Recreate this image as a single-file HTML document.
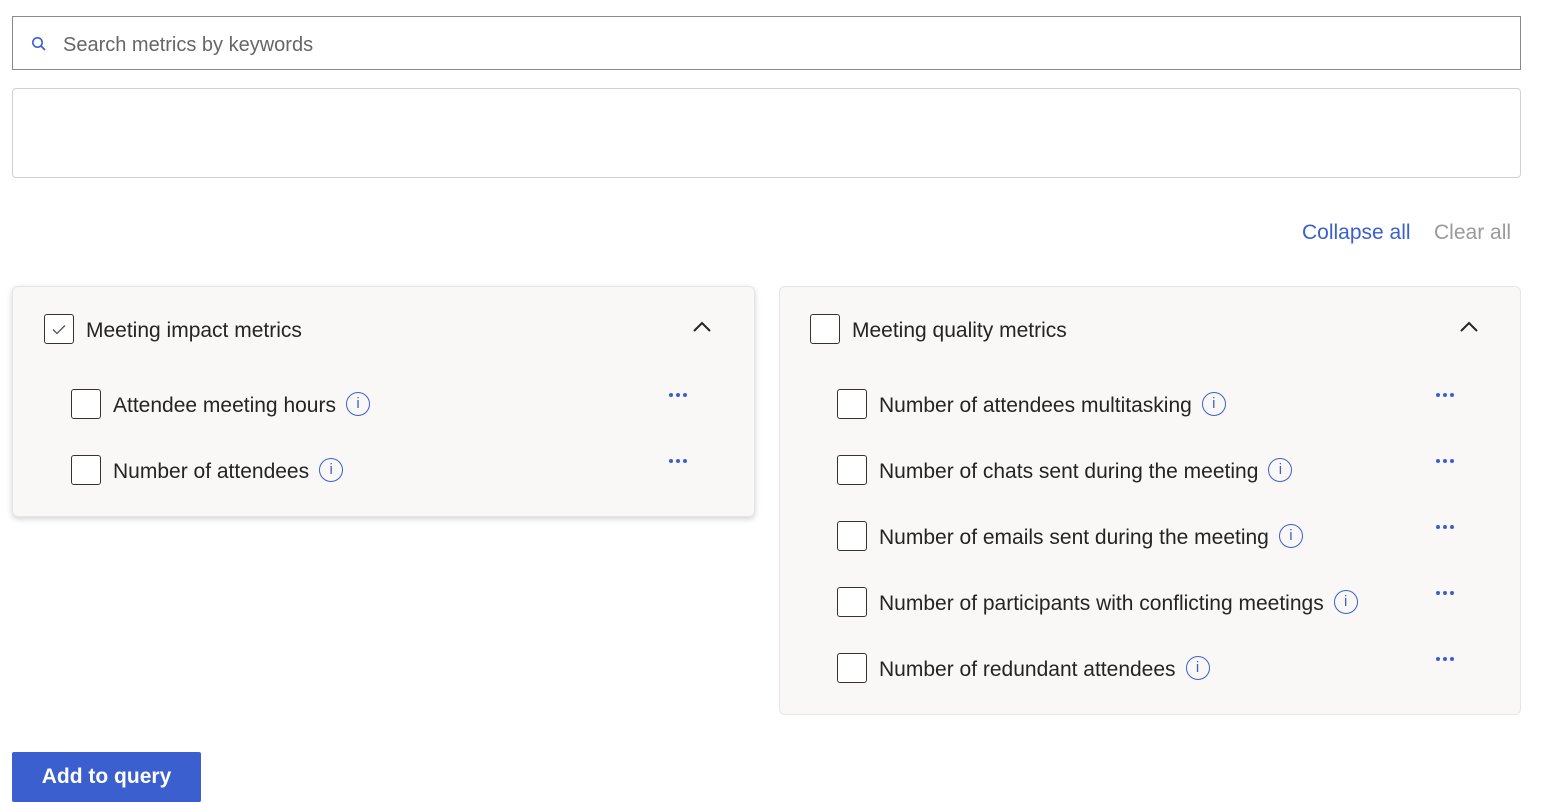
<!DOCTYPE html>
<html><head><meta charset="utf-8"><style>
*{box-sizing:border-box;margin:0;padding:0}
body{width:1554px;height:799px;background:#fff;font-family:"Liberation Sans",sans-serif;color:#242424;position:relative;overflow:hidden}
.abs{position:absolute}
.search{left:12px;top:16px;width:1509px;height:54px;border:1px solid #8a8a8a}
.box2{left:12px;top:88px;width:1509px;height:90px;border:1px solid #d1d1d1;border-radius:4px}
.card{background:#f9f8f7;border:1px solid #e6e6e6;border-radius:6px}
.cb{position:absolute;width:30px;height:30px;border:1px solid #333;border-radius:3px;background:#fff}
.t{position:absolute;font-size:21px;white-space:nowrap;line-height:24px}
.info{display:inline-block;width:24px;height:24px;border:1.6px solid #3b5fcf;border-radius:50%;color:#3b5fcf;font-size:15px;text-align:center;line-height:21px;margin-left:10px;vertical-align:top;position:relative;top:-2px}
.dots{position:absolute}
</style></head><body>
<div class="abs search">
<svg class="abs" style="left:18px;top:19px" width="16" height="16" viewBox="0 0 16 16"><circle cx="6.5" cy="6.5" r="4.7" fill="none" stroke="#3b5fcf" stroke-width="1.6"/><path d="M10 10l4 4" stroke="#3b5fcf" stroke-width="1.8"/></svg>
<div class="t" style="left:50px;top:16px;font-size:20px;color:#666">Search metrics by keywords</div>
</div>
<div class="abs box2"></div>
<div class="t" style="left:1302px;top:221px;color:#3b5fcf">Collapse all</div>
<div class="t" style="left:1434px;top:221px;color:#9a9a9a">Clear all</div>

<div class="abs card" style="left:12px;top:286px;width:743px;height:231px;box-shadow:0 2px 6px rgba(0,0,0,.18)"></div>
<div class="cb" style="left:44px;top:314px"><svg width="28" height="28" viewBox="0 0 28 28"><path d="M8 14.5l4 4 8-8" fill="none" stroke="#555" stroke-width="1.3"/></svg></div>
<div class="t" style="left:86px;top:319px">Meeting impact metrics</div>
<svg class="abs" style="left:692px;top:320px" width="20" height="14" viewBox="0 0 20 14"><path d="M2 11l8-8 8 8" fill="none" stroke="#242424" stroke-width="2"/></svg>
<div class="cb" style="left:71px;top:389px"></div>
<div class="t" style="left:113px;top:394px">Attendee meeting hours<span class="info">i</span></div>
<svg class="dots" style="left:668px;top:392px" width="20" height="6"><circle cx="3" cy="3" r="2" fill="#3b5fcf"/><circle cx="10" cy="3" r="2" fill="#3b5fcf"/><circle cx="17" cy="3" r="2" fill="#3b5fcf"/></svg>
<div class="cb" style="left:71px;top:455px"></div>
<div class="t" style="left:113px;top:460px">Number of attendees<span class="info">i</span></div>
<svg class="dots" style="left:668px;top:458px" width="20" height="6"><circle cx="3" cy="3" r="2" fill="#3b5fcf"/><circle cx="10" cy="3" r="2" fill="#3b5fcf"/><circle cx="17" cy="3" r="2" fill="#3b5fcf"/></svg>

<div class="abs card" style="left:779px;top:286px;width:742px;height:429px"></div>
<div class="cb" style="left:810px;top:314px"></div>
<div class="t" style="left:852px;top:319px">Meeting quality metrics</div>
<svg class="abs" style="left:1459px;top:320px" width="20" height="14" viewBox="0 0 20 14"><path d="M2 11l8-8 8 8" fill="none" stroke="#242424" stroke-width="2"/></svg>

<div class="cb" style="left:837px;top:389px"></div>
<div class="t" style="left:879px;top:394px">Number of attendees multitasking<span class="info">i</span></div>
<svg class="dots" style="left:1435px;top:392px" width="20" height="6"><circle cx="3" cy="3" r="2" fill="#3b5fcf"/><circle cx="10" cy="3" r="2" fill="#3b5fcf"/><circle cx="17" cy="3" r="2" fill="#3b5fcf"/></svg>
<div class="cb" style="left:837px;top:455px"></div>
<div class="t" style="left:879px;top:460px">Number of chats sent during the meeting<span class="info">i</span></div>
<svg class="dots" style="left:1435px;top:458px" width="20" height="6"><circle cx="3" cy="3" r="2" fill="#3b5fcf"/><circle cx="10" cy="3" r="2" fill="#3b5fcf"/><circle cx="17" cy="3" r="2" fill="#3b5fcf"/></svg>
<div class="cb" style="left:837px;top:521px"></div>
<div class="t" style="left:879px;top:526px">Number of emails sent during the meeting<span class="info">i</span></div>
<svg class="dots" style="left:1435px;top:524px" width="20" height="6"><circle cx="3" cy="3" r="2" fill="#3b5fcf"/><circle cx="10" cy="3" r="2" fill="#3b5fcf"/><circle cx="17" cy="3" r="2" fill="#3b5fcf"/></svg>
<div class="cb" style="left:837px;top:587px"></div>
<div class="t" style="left:879px;top:592px">Number of participants with conflicting meetings<span class="info">i</span></div>
<svg class="dots" style="left:1435px;top:590px" width="20" height="6"><circle cx="3" cy="3" r="2" fill="#3b5fcf"/><circle cx="10" cy="3" r="2" fill="#3b5fcf"/><circle cx="17" cy="3" r="2" fill="#3b5fcf"/></svg>
<div class="cb" style="left:837px;top:653px"></div>
<div class="t" style="left:879px;top:658px">Number of redundant attendees<span class="info">i</span></div>
<svg class="dots" style="left:1435px;top:656px" width="20" height="6"><circle cx="3" cy="3" r="2" fill="#3b5fcf"/><circle cx="10" cy="3" r="2" fill="#3b5fcf"/><circle cx="17" cy="3" r="2" fill="#3b5fcf"/></svg>

<div class="abs" style="left:12px;top:752px;width:189px;height:50px;background:#3b5fcf;border-radius:2px;color:#fff;font-size:21px;font-weight:bold;text-align:center;line-height:50px">Add to query</div>
</body></html>
